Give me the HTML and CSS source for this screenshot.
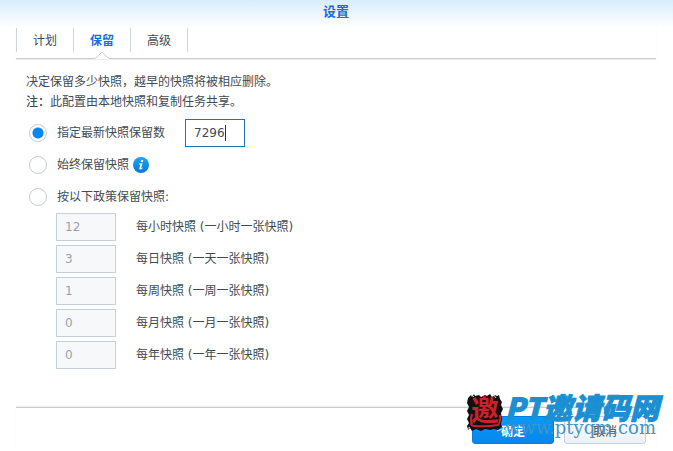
FILE: index.html
```html
<!DOCTYPE html>
<html lang="zh-CN">

<head>
    <meta charset="UTF-8">
    <title>设置</title>
    <link rel="stylesheet" href="styles.css">
</head>

<body>

    <form class="dialog">
        <h1 class="title">设置</h1>
        <nav class="tabs">
            <button type="button" class="tab">计划</button>
            <button type="button" class="tab active">保留
                <svg class="tab-arrow" width="14" height="8" viewBox="0 0 14 8">
                    <path d="M0 8V7L7 1L14 7V8Z" fill="#fff" />
                    <path d="M0 7L1 7L7 1L13 7L14 7" fill="none" stroke="#ccc" />
                </svg>
            </button>
            <button type="button" class="tab">高级</button>
        </nav>

        <div class="content">
            <p>决定保留多少快照，越早的快照将被相应删除。</p>
            <p><span class="note">注：</span>此配置由本地快照和复制任务共享。</p>

            <div class="options">
                <div class="option">
                    <input type="radio" name="policy" id="keep-latest" checked>
                    <label class="latest-label" for="keep-latest">指定最新快照保留数</label>
                    <div class="edit">
                        <input type="text" class="number focused" value="7296" aria-label="快照保留数">
                        <span class="caret"></span>
                    </div>
                </div>
                <div class="option">
                    <input type="radio" name="policy" id="keep-all">
                    <label for="keep-all">始终保留快照</label>
                    <svg class="info" width="16" height="16" viewBox="0 0 16 16">
                        <defs>
                            <linearGradient id="info-bg" x2="0" y2="1">
                                <stop stop-color="#18a5f8" />
                                <stop offset="1" stop-color="#0879dc" />
                            </linearGradient>
                        </defs>
                        <circle cx="8" cy="8" r="8" fill="url(#info-bg)" />
                        <circle cx="9" cy="4" r="1.2" fill="#fff" />
                        <path d="M6 6.6L9.6 6.2L8.2 11.2L9.7 10.4V11.2Q6.2 13.8 6.3 11.4L7.4 7.4H6Z" fill="#fff" />
                    </svg>
                </div>
                <div class="option">
                    <input type="radio" name="policy" id="keep-policy">
                    <label for="keep-policy">按以下政策保留快照:</label>
                </div>
            </div>

            <div class="policies">
                <div class="policy">
                    <input type="text" class="number" id="hourly" value="12" disabled>
                    <label for="hourly">每小时快照 (一小时一张快照)</label>
                </div>
                <div class="policy">
                    <input type="text" class="number" id="daily" value="3" disabled>
                    <label for="daily">每日快照 (一天一张快照)</label>
                </div>
                <div class="policy">
                    <input type="text" class="number" id="weekly" value="1" disabled>
                    <label for="weekly">每周快照 (一周一张快照)</label>
                </div>
                <div class="policy">
                    <input type="text" class="number" id="monthly" value="0" disabled>
                    <label for="monthly">每月快照 (一月一张快照)</label>
                </div>
                <div class="policy">
                    <input type="text" class="number" id="yearly" value="0" disabled>
                    <label for="yearly">每年快照 (一年一张快照)</label>
                </div>
            </div>
        </div>

        <footer class="footer">
            <button type="button" class="btn primary">确定</button>
            <button type="button" class="btn">取消</button>
        </footer>
    </form>

    <!-- watermark over the bottom right corner -->
    <div class="watermark">
        <div class="seal">
            <svg width="36" height="39" viewBox="0 0 36 39">
                <path d="M1 5L4 2L5 4L7 1L8 3L12 2L14 4L18 2L20 3L23 1L25 4L28 2L30 3L32 2L33 6L35 9L34 12L36 16L34 20L35 26L34 31L35 34L31 37L27 36L23 37L18 36L14 38L9 36L5 38L3 35L1 37L0 33L2 30L0 26L2 22L0 18L2 14L0 10Z" fill="#111" />
                <path d="M5 31Q3 26 5 21M33 22Q34 28 31 32Q19 34 8 33Q4 33 4 30" fill="none" stroke="#c9222a" stroke-width="2" />
                <path d="M0 36L3 34M30 38L35 36M4 1L7 4M26 1L29 5" stroke="#ddd" stroke-width="1" />
            </svg>
            <span class="seal-text">邀</span>
        </div>
        <div class="brand">
            <span class="brand-name">PT邀请码网</span>
            <span class="brand-url">www.ptyqm.com</span>
        </div>
    </div>

</body>

</html>
```
FILE: styles.css
```css
* {
    box-sizing: border-box;
}

body {
    margin: 0;
    background-color: #fff;
    color: #414b55;
    font-family: "Noto Sans CJK SC", sans-serif;
    font-size: 12px;
    line-height: 20px;
}

button,
input {
    margin: 0;
    font-family: inherit;
    font-size: 12px;
}

p {
    margin: 0;
}

label {
    font-family: "DejaVu Sans", "Noto Sans CJK SC", sans-serif;
}

.dialog {
    display: flex;
    flex-direction: column;
    min-height: 100vh;
    padding: 0 17px 0 16px;
    background: linear-gradient(#d8edfc, #fff 28px);
}

.title {
    margin: 0;
    padding: 1px 0 7px;
    color: #1470d8;
    font-size: 13px;
    font-weight: bold;
    line-height: 20px;
    text-align: center;
}

/* tabs */
.tabs {
    display: flex;
    height: 31px;
    border-bottom: 1px solid #ccc;
    box-shadow: 0 1px 1px #eee;
}

.tab {
    position: relative;
    width: 57px;
    height: 24px;
    padding: 0;
    border: 0;
    border-left: 1px solid #ccd5de;
    background: none;
    color: #414b55;
    line-height: 24px;
}

.tab:last-child {
    width: 58px;
    border-right: 1px solid #ccd5de;
}

.tab.active {
    color: #1470e0;
    font-weight: bold;
}

.tab-arrow {
    position: absolute;
    left: 21px;
    top: 23px;
}

/* content */
.content {
    flex: 1;
    padding: 12px 10px 0;
}

.note {
    font-weight: 500;
}

.option {
    display: flex;
    align-items: center;
    height: 32px;
    padding-left: 3px;
}

.options {
    padding-top: 6px;
}

input[type="radio"] {
    appearance: none;
    width: 18px;
    height: 18px;
    margin-right: 10px;
    border: 1px solid #c3cdd8;
    border-radius: 50%;
    background-color: #fff;
}

input[type="radio"]:checked {
    background: radial-gradient(circle, #0a86f0 5px, #fff 6px);
}

.latest-label {
    width: 128px;
}

.edit {
    position: relative;
}

.number {
    display: block;
    width: 60px;
    height: 28px;
    padding: 0 8px;
    border: 1px solid #c6d0da;
    border-radius: 0;
    background-color: #fff;
    color: #414b55;
    font-family: "DejaVu Sans", sans-serif;
    outline: none;
}

.number:disabled {
    background-color: #f6f8fa;
    color: #98a2ae;
}

.number.focused {
    border-color: #1f74ae;
}

.caret {
    position: absolute;
    left: 40px;
    top: 6px;
    width: 1px;
    height: 16px;
    background-color: #333;
}

.info {
    margin-left: 4px;
}

.policies {
    display: flex;
    flex-direction: column;
    gap: 4px;
    padding-left: 30px;
}

.policy {
    display: flex;
    align-items: center;
    gap: 20px;
}

/* footer */
.footer {
    display: flex;
    justify-content: flex-end;
    gap: 10px;
    padding: 8px 10px 7px;
    border-top: 1px solid #ccc;
    box-shadow: 0 -1px 1px #eee;
}

.btn {
    width: 82px;
    height: 28px;
    padding: 0;
    border: 1px solid #c5d0dc;
    border-radius: 3px;
    background: linear-gradient(#fafbfd, #edf1f7);
    color: #414b55;
}

.btn.primary {
    border-color: #087bdc;
    background: linear-gradient(#0a9af8, #0786ec);
    color: #fff;
    font-weight: bold;
}

/* watermark */
.watermark {
    position: absolute;
    right: 14px;
    bottom: 14px;
    display: flex;
    gap: 2px;
    pointer-events: none;
}

.seal {
    position: relative;
    height: 39px;
}

.seal-text {
    position: absolute;
    left: 4px;
    top: 0;
    color: #c9222a;
    font-size: 28px;
    font-weight: bold;
    line-height: 32px;
}

.brand {
    display: flex;
    flex-direction: column;
    color: #1c8fd2;
}

.brand-name {
    font-size: 29px;
    font-style: italic;
    font-weight: 900;
    line-height: 26px;
    -webkit-text-stroke: 1px #1c8fd2;
}

.brand-url {
    color: #4295c4;
    font-family: "DejaVu Serif", serif;
    font-size: 18px;
    line-height: 18px;
}
```
